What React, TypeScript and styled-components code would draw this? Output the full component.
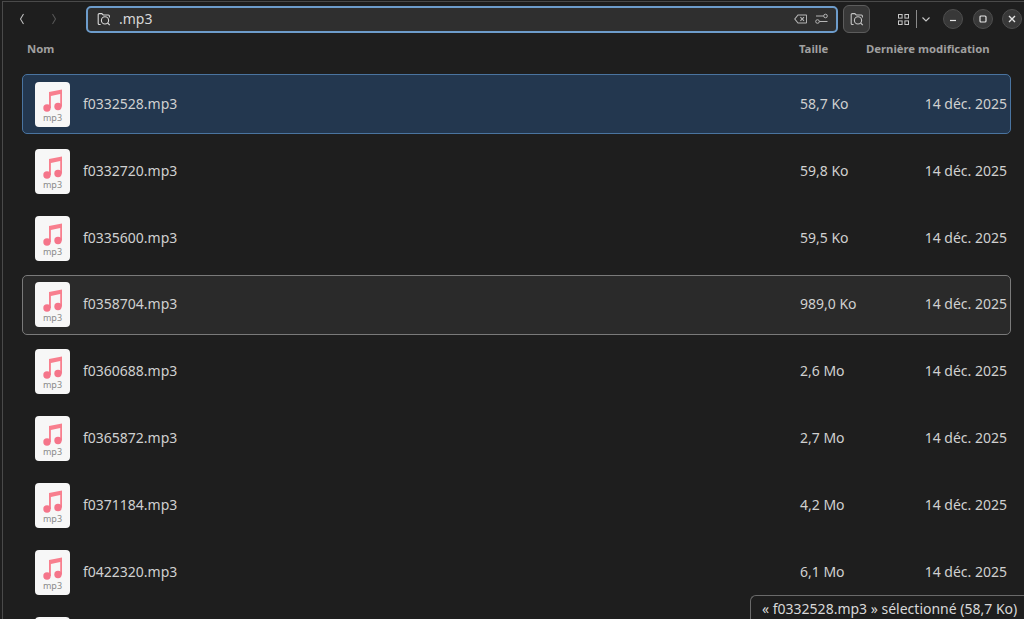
import React from 'react';
import styled, { createGlobalStyle } from 'styled-components';

const GlobalStyle = createGlobalStyle`
  html, body {
    margin: 0;
    padding: 0;
    background: #1e1e1e;
    overflow: hidden;
  }
  body {
    font-family: "Noto Sans", "Open Sans", "DejaVu Sans", sans-serif;
  }
`;

const Win = styled.div`
  position: relative;
  width: 1022px;
  height: 618px;
  margin: 1px 0 0 2px;
  box-sizing: border-box;
  overflow: hidden;
  background: #1e1e1e;
  border-left: 1px solid #4a4a4a;
  border-top: 1px solid #4a4a4a;
`;

const HeaderBar = styled.header`
  display: flex;
  align-items: center;
  height: 28px;
  margin-top: 3px;
`;

const NavButton = styled.div<{ $dim?: boolean }>`
  width: 32px;
  display: flex;
  justify-content: center;
  color: ${(p) => (p.$dim ? '#555' : '#bdbdbd')};
`;

const NavGroup = styled.div`
  display: flex;
  width: 83px;
  padding-left: 3px;
  box-sizing: border-box;
`;

const SearchBox = styled.div`
  width: 752px;
  height: 27px;
  box-sizing: border-box;
  display: flex;
  align-items: center;
  gap: 8px;
  padding: 0 8px 0 9px;
  background: #2f2f2f;
  border: 2px solid #6d9ccb;
  border-radius: 5px;
  color: #d8d8d8;
  font-size: 14px;
`;

const Query = styled.span`
  flex: 1;
  margin-top: -1px;
`;

const SearchTools = styled.div`
  display: flex;
  align-items: center;
  gap: 8px;
  color: #b5b5b5;
`;

const ToggleButton = styled.div`
  width: 27px;
  height: 28px;
  margin-left: 5px;
  box-sizing: border-box;
  display: flex;
  align-items: center;
  justify-content: center;
  background: #383838;
  border: 1px solid #5c5c5c;
  border-radius: 6px;
  color: #c4c4c4;
`;

const ViewGroup = styled.div`
  display: flex;
  align-items: center;
  margin-left: 28px;
  color: #c8c8c8;
  gap: 4px;
`;

const Divider = styled.div`
  width: 1px;
  height: 18px;
  margin-left: 3px;
  background: #8a8a8a;
`;

const WindowControls = styled.div`
  display: flex;
  align-items: center;
  gap: 9.5px;
  margin-left: 12px;
`;

const WindowButton = styled.div`
  width: 20px;
  height: 20px;
  box-sizing: border-box;
  border-radius: 50%;
  background: #383838;
  border: 1px solid #4e4e4e;
  display: flex;
  align-items: center;
  justify-content: center;
  color: #e4e4e4;
`;

const ColumnHead = styled.div`
  display: grid;
  grid-template-columns: 772px 67px auto;
  height: 30px;
  padding-left: 24px;
  align-items: center;
  color: #a0a0a0;
  font-size: 11.3px;
  font-weight: 700;
`;

const List = styled.div`
  display: flex;
  flex-direction: column;
  gap: 6.85px;
  margin-top: 11.4px;
  padding-left: 19px;
  width: 989px;
`;

const Row = styled.div<{ $state?: 'selected' | 'focused' }>`
  flex: none;
  height: 60px;
  box-sizing: border-box;
  display: grid;
  grid-template-columns: 765px 1fr auto;
  align-items: center;
  padding: 0 3px 0 12px;
  border-radius: 5px;
  color: #d0d0d0;
  font-size: 14px;
  border: 1px solid
    ${(p) =>
      p.$state === 'selected' ? '#4a74a0' : p.$state === 'focused' ? '#7a7a7a' : 'transparent'};
  background: ${(p) =>
    p.$state === 'selected' ? '#23374f' : p.$state === 'focused' ? '#2a2a2a' : 'transparent'};
`;

const NameCell = styled.div`
  display: flex;
  align-items: center;
  gap: 13px;
`;

const CellText = styled.span`
  margin-top: -2px;
`;

const FileIcon = styled.div`
  width: 35px;
  height: 45px;
  flex: none;
  box-sizing: border-box;
  border-radius: 4px;
  background: #f7f7f7;
  display: flex;
  flex-direction: column;
  align-items: center;
  padding-top: 7px;
  color: #8a8a8a;
  font-size: 9px;
  line-height: 10px;
`;

const Status = styled.div`
  position: absolute;
  right: 0;
  bottom: 0;
  width: 274px;
  height: 24px;
  box-sizing: border-box;
  padding: 3px 0 0 11px;
  background: #1e1e1e;
  border: 1px solid #6a6a6a;
  border-right: none;
  border-bottom: none;
  border-top-left-radius: 6px;
  color: #d8d8d8;
  font-size: 14px;
  white-space: nowrap;
`;

const ChevronLeft = () => (
  <svg width="8" height="12" viewBox="0 0 8 12" fill="none" stroke="currentColor" strokeWidth="1.1">
    <path d="M5.5 1 2.5 6l3 5" />
  </svg>
);

const ChevronRight = () => (
  <svg width="8" height="12" viewBox="0 0 8 12" fill="none" stroke="currentColor" strokeWidth="1.1">
    <path d="M2.5 1l3 5-3 5" />
  </svg>
);

const FolderSearch = () => (
  <svg width="14" height="14" viewBox="0 0 14 14" fill="none" stroke="currentColor" strokeWidth="1.1">
    <path d="M3.6 12.5H2.2a1 1 0 0 1-1-1V2.6a1 1 0 0 1 1-1h2.6l1.4 1.4h5.2a1 1 0 0 1 1 1V5.4" />
    <circle cx="8" cy="8.4" r="3.6" />
    <path d="M10.6 11l2.2 2.2" />
  </svg>
);

const ClearIcon = () => (
  <svg width="13" height="12" viewBox="0 0 13 12" fill="none" stroke="currentColor" strokeWidth="1.1">
    <path d="M4 2H12a.6.6 0 0 1 .6.6v6.8a.6.6 0 0 1-.6.6H4L.8 6z" />
    <path d="M6.4 4.2l3.6 3.6M10 4.2 6.4 7.8" />
  </svg>
);

const FilterIcon = () => (
  <svg width="13" height="12" viewBox="0 0 13 12" fill="none" stroke="currentColor" strokeWidth="1">
    <circle cx="10.5" cy="3" r="1.8" />
    <path d="M1 3h7.7" />
    <circle cx="2.5" cy="8.5" r="1.8" />
    <path d="M4.3 8.5H12.5" />
  </svg>
);

const GridIcon = () => (
  <svg width="11" height="11" viewBox="0 0 11 11" fill="none" stroke="currentColor" strokeWidth="1">
    <rect x=".5" y=".5" width="3.6" height="3.6" />
    <rect x="6.9" y=".5" width="3.6" height="3.6" />
    <rect x=".5" y="6.9" width="3.6" height="3.6" />
    <rect x="6.9" y="6.9" width="3.6" height="3.6" />
  </svg>
);

const ChevronDown = () => (
  <svg width="10" height="7" viewBox="0 0 10 7" fill="none" stroke="currentColor" strokeWidth="1.1">
    <path d="M1.5 1.5 5 5l3.5-3.5" />
  </svg>
);

const MusicNote = () => (
  <svg width="19" height="23" viewBox="0 0 19 23" style={{ marginBottom: 1 }}>
    <path fill="#f87f8e" d="M6 3 19 .4V17.5h-1.8V5L7.9 7V19H6z" />
    <circle cx="4" cy="19" r="3.7" fill="#f5758a" />
    <circle cx="15" cy="17.5" r="3.7" fill="#f5758a" />
  </svg>
);

type FileRow = { name: string; size: string; state?: 'selected' | 'focused' };

const files: FileRow[] = [
  { name: 'f0332528.mp3', size: '58,7 Ko', state: 'selected' },
  { name: 'f0332720.mp3', size: '59,8 Ko' },
  { name: 'f0335600.mp3', size: '59,5 Ko' },
  { name: 'f0358704.mp3', size: '989,0 Ko', state: 'focused' },
  { name: 'f0360688.mp3', size: '2,6 Mo' },
  { name: 'f0365872.mp3', size: '2,7 Mo' },
  { name: 'f0371184.mp3', size: '4,2 Mo' },
  { name: 'f0422320.mp3', size: '6,1 Mo' },
  { name: '', size: '' },
];

const App = () => {
  return (
    <>
      <GlobalStyle />
      <Win>
        <HeaderBar>
          <NavGroup>
            <NavButton>
              <ChevronLeft />
            </NavButton>
            <NavButton $dim>
              <ChevronRight />
            </NavButton>
          </NavGroup>
          <SearchBox>
            <FolderSearch />
            <Query>.mp3</Query>
            <SearchTools>
              <ClearIcon />
              <FilterIcon />
            </SearchTools>
          </SearchBox>
          <ToggleButton>
            <FolderSearch />
          </ToggleButton>
          <ViewGroup>
            <GridIcon />
            <Divider />
            <ChevronDown />
          </ViewGroup>
          <WindowControls>
            <WindowButton>
              <svg width="8" height="8" viewBox="0 0 8 8" stroke="currentColor" strokeWidth="1.2">
                <path d="M1 5.5h6" />
              </svg>
            </WindowButton>
            <WindowButton>
              <svg width="8" height="8" viewBox="0 0 8 8" fill="none" stroke="currentColor" strokeWidth="1.2">
                <rect x="1" y="1" width="6" height="6" rx="1" />
              </svg>
            </WindowButton>
            <WindowButton>
              <svg width="8" height="8" viewBox="0 0 8 8" stroke="currentColor" strokeWidth="1.4">
                <path d="M1 1l6 6M7 1 1 7" />
              </svg>
            </WindowButton>
          </WindowControls>
        </HeaderBar>
        <ColumnHead>
          <span>Nom</span>
          <span>Taille</span>
          <span>Dernière modification</span>
        </ColumnHead>
        <List>
          {files.map((file, i) => (
            <Row key={i} $state={file.state}>
              <NameCell>
                <FileIcon>
                  <MusicNote />
                  {/* last row only peeks in at the bottom edge */}
                  {file.name && 'mp3'}
                </FileIcon>
                <CellText>{file.name}</CellText>
              </NameCell>
              {file.name && <CellText>{file.size}</CellText>}
              {file.name && <CellText>14 déc. 2025</CellText>}
            </Row>
          ))}
        </List>
        <Status>« f0332528.mp3 » sélectionné (58,7 Ko)</Status>
      </Win>
    </>
  );
};

export default App;
